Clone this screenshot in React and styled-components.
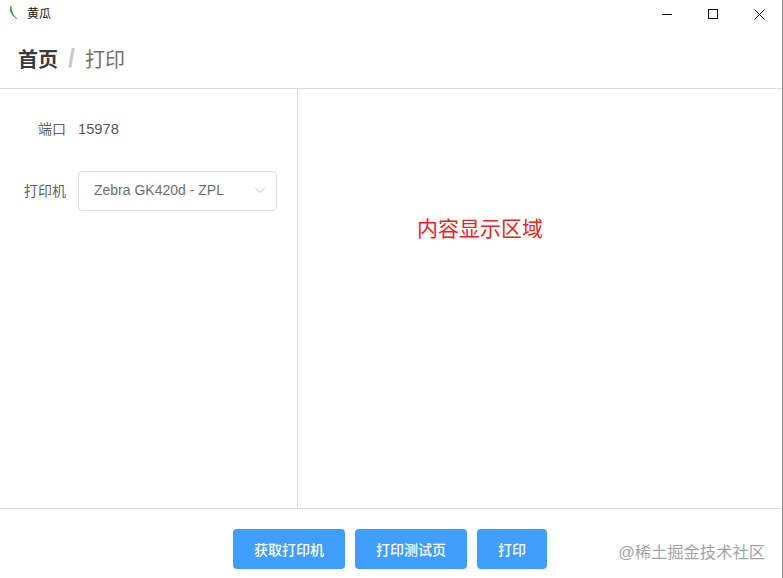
import React from 'react';
import styled, { createGlobalStyle } from 'styled-components';

const Global = createGlobalStyle`
  html, body { margin: 0; padding: 0; background: #fff; }
  * { box-sizing: border-box; }
  #root { height: 578px; }
`;
const FONT = `"Liberation Sans", "Noto Sans CJK SC", sans-serif`;

const Windows = styled.div`
  position: relative; width: 783px; height: 578px; display: flex; flex-direction: column;
  font-family: ${FONT}; background: #fff; border-right: 1px solid #8f8f8f; overflow: hidden;
`;
const TitleBar = styled.div`
  height: 28px; display: flex; align-items: center; flex: none;
`;
const AppIcon = styled.svg`
  width: 10px; height: 16px; margin-left: 9px; flex: none;
`;
const AppName = styled.span`
  margin-left: 8px; font-size: 12px; color: #111; line-height: 28px;
`;
const WinButtons = styled.div`
  margin-left: auto; display: flex; align-items: center; height: 100%;
`;
const WinBtn = styled.div`
  width: 46px; height: 28px; display: flex; align-items: center; justify-content: center;
  svg { display: block; }
`;
const Header = styled.header`
  height: 61px; flex: none; display: flex; align-items: center; padding: 0 18px; border-bottom: 1px solid #dcdcdc;
  font-size: 20px;
`;
const Crumb = styled.span`
  font-weight: ${p => (p.$current ? 400 : 700)};
  color: ${p => (p.$current ? '#707070' : '#3a3a3a')};
`;
const Sep = styled.span`
  width: 27px; text-align: center; color: #c8c8c8; font-weight: 700; font-size: 25px;
`;
const Body = styled.main`
  flex: 1; display: flex; min-height: 0;
`;
const Side = styled.aside`
  width: 298px; flex: none; border-right: 1px solid #dcdcdc; padding: 20px 20px 0 0;
  display: flex; flex-direction: column; gap: 22px;
`;
const FormRow = styled.div`
  display: flex; align-items: center; height: 40px;
`;
const Label = styled.label`
  width: 78px; flex: none; padding: 0 12px 2px 0; text-align: right; font-size: 14px; color: #606266;
`;
const Value = styled.span`
  font-size: 14.7px; color: #555;
`;
const Select = styled.div`
  width: 199px; height: 40px; display: flex; align-items: center; justify-content: space-between;
  border: 1px solid #dcdfe6; border-radius: 4px; padding: 0 10px 2px 15px; font-size: 14px; color: #6c6e72;
`;
const Content = styled.section`
  flex: 1; padding: 126px 0 0 119px;
`;
const Note = styled.div`
  font-size: 21px; line-height: 28px; color: #e3261b; height: 28px;
`;
const Footer = styled.footer`
  height: 70px; flex: none; border-top: 1px solid #dcdcdc; display: flex; align-items: flex-start;
  padding: 20px 0 0 233px; gap: 10px;
`;
const Button = styled.button`
  height: 40px; width: ${p => p.$w}px; border: 0; border-radius: 4px; background: #409eff; color: #fff;
  font-family: ${FONT}; font-size: 14px; padding: 0; font-weight: 500;
`;
const Watermark = styled.div`
  position: absolute; right: 17px; bottom: 17px; font-size: 16.3px; line-height: 18px; color: #a3a3a3;
`;

export default function App() {
  return (
    <Windows>
      <Global />
      <TitleBar>
        <AppIcon viewBox="0 0 10 16">
          <path d="M2 0 C2.2 5 3.8 9.5 8 12.8 C4.6 10.8 1.8 7.5 1.2 3.5 Z" fill="#1f8a2c" stroke="#1f8a2c" strokeWidth="0.6" />
        </AppIcon>
        <AppName>黄瓜</AppName>
        <WinButtons>
          <WinBtn>
            <svg width="10" height="10" viewBox="0 0 10 10"><path d="M0 5.5H10" stroke="#111" fill="none" /></svg>
          </WinBtn>
          <WinBtn>
            <svg width="10" height="10" viewBox="0 0 10 10"><rect x="0.5" y="0.5" width="9" height="9" stroke="#111" fill="none" /></svg>
          </WinBtn>
          <WinBtn>
            <svg width="11" height="11" viewBox="0 0 11 11"><path d="M0.5 0.5L10.5 10.5M10.5 0.5L0.5 10.5" stroke="#111" fill="none" /></svg>
          </WinBtn>
        </WinButtons>
      </TitleBar>
      <Header>
        <Crumb>首页</Crumb>
        <Sep>/</Sep>
        <Crumb $current>打印</Crumb>
      </Header>
      <Body>
        <Side>
          <FormRow>
            <Label>端口</Label>
            <Value>15978</Value>
          </FormRow>
          <FormRow>
            <Label>打印机</Label>
            <Select>
              Zebra GK420d - ZPL
              <svg width="12" height="8" viewBox="0 0 12 8"><path d="M1 1.5L6 6.5L11 1.5" stroke="#c0c4cc" fill="none" /></svg>
            </Select>
          </FormRow>
        </Side>
        <Content>
          <Note>内容显示区域</Note>
        </Content>
      </Body>
      <Footer>
        <Button $w={112}>获取打印机</Button>
        <Button $w={112}>打印测试页</Button>
        <Button $w={70}>打印</Button>
      </Footer>
      <Watermark>@稀土掘金技术社区</Watermark>
    </Windows>
  );
}
